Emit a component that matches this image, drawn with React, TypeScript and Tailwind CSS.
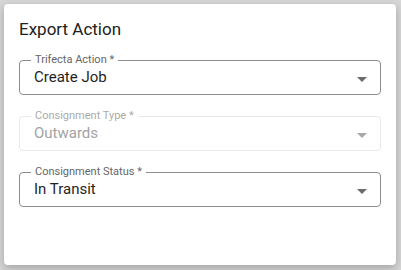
const ArrowDrop = ({ disabled }: { disabled?: boolean }) => (
  <svg
    viewBox="0 0 24 24"
    className={disabled ? 'h-6 w-6 fill-[#a8a8a8]' : 'h-6 w-6 fill-[#6b6b6b]'}
  >
    <path d="M7 10l5 5 5-5z" />
  </svg>
);

type FieldProps = {
  label: string;
  value: string;
  disabled?: boolean;
};

const SelectField = ({ label, value, disabled }: FieldProps) => (
  <div
    className={
      disabled
        ? 'relative flex h-[35px] items-center rounded border border-[#e9e9e9] pl-[14px] pr-[6px]'
        : 'relative flex h-[35px] items-center rounded border border-[#8e8e8e] pl-[14px] pr-[6px]'
    }
  >
    <span
      className={
        disabled
          ? 'absolute -top-[7px] left-[11px] bg-white px-[4px] text-[11px] leading-[11px] text-[#ababab]'
          : 'absolute -top-[7px] left-[11px] bg-white px-[4px] text-[11px] leading-[11px] text-[#666666]'
      }
    >
      {label}
    </span>
    <span
      className={
        disabled
          ? 'flex-1 text-[15px] text-[#a3a3a3]'
          : 'flex-1 text-[15px] text-[#1f1f1f]'
      }
    >
      {value}
    </span>
    <span className="mt-[3px]">
      <ArrowDrop disabled={disabled} />
    </span>
  </div>
);

export default function App() {
  return (
    <div
      className="h-[270px] w-[401px] bg-[#d7d7d7] p-[4px]"
      style={{ fontFamily: 'Roboto, "Liberation Sans", sans-serif' }}
    >
      <div className="h-[261px] w-[392px] rounded bg-white px-[15px] pt-[13px] shadow-[0_3px_10px_rgba(0,0,0,0.25)]">
        <h2 className="text-[17px] leading-6 text-[#212121]">Export Action</h2>
        <div className="mt-[19px] flex flex-col gap-[21px]">
          <SelectField label="Trifecta Action *" value="Create Job" />
          <SelectField label="Consignment Type *" value="Outwards" disabled />
          <SelectField label="Consignment Status *" value="In Transit" />
        </div>
      </div>
    </div>
  );
}
